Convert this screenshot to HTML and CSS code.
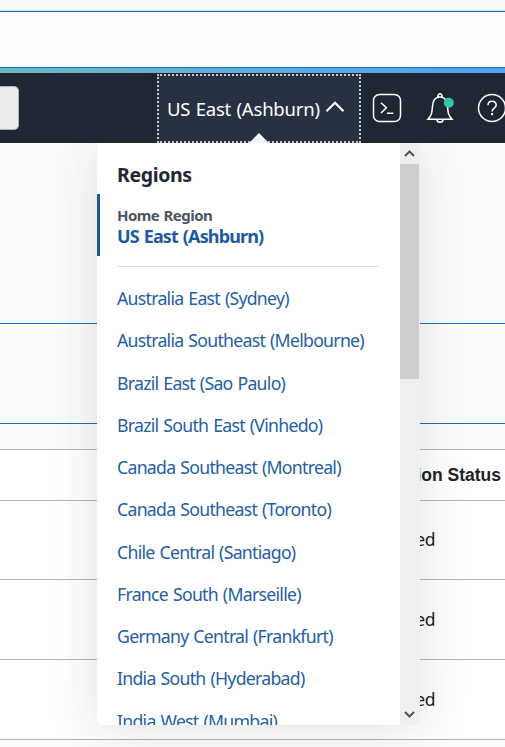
FILE: index.html
```html
<!DOCTYPE html>
<html lang="en">
<head>
<meta charset="utf-8">
<title>Regions</title>
<link rel="stylesheet" href="styles.css">
</head>
<body>
<div class="tabs"></div>
<div class="toolbar"></div>
<div class="accent"></div>
<header class="header">
  <div class="search"></div>
  <button class="region-button"><span class="region-name">US East (Ashburn)</span>
    <svg class="chevron" width="20" height="12" viewBox="0 0 20 12"><path d="M1.5 10.2 10 1.8l8.500 8.400"/></svg>
    <i class="arrow"></i>
  </button>
  <svg class="icon shell" width="30" height="30" viewBox="0 0 30 30"><rect x="1.500" y="1.500" width="27" height="27" rx="6"/><path d="M9 9.700l5.400 5.100L9 20M15 20.300h6.300"/></svg>
  <svg class="icon bell" width="28" height="32" viewBox="0 0 28 32"><path d="M2 27.300C5 24 6 22 6.400 15c.3-6.500 3-10 7.600-10s7.300 3.500 7.600 10c.4 7 1.400 9 4.400 12.300zM11 27.800c0 3.300 6 3.300 6 0M12 5c-.7-4.200 4.700-4.200 4 0"/><circle class="dot" cx="22.800" cy="10.800" r="5"/></svg>
  <svg class="icon help" width="30" height="30" viewBox="0 0 30 30"><circle cx="15" cy="15" r="13.500"/><path d="M11 12.200c0-5.300 8.200-5.200 8.200-.3 0 3.400-4.100 3-4.100 6.600"/><path class="point" d="M15.100 20v2.200"/></svg>
</header>
<main class="page">
  <div class="summary"></div>
  <div class="panel"></div>
  <div class="gap"></div>
  <div class="row head">Region Status</div>
  <div class="row first"><span>Subscribed</span></div>
  <div class="row"><span>Subscribed</span></div>
  <div class="row"><span>Subscribed</span></div>
  <section class="menu">
    <div class="content">
      <h2>Regions</h2>
      <div class="home"><small>Home Region</small><strong>US East (Ashburn)</strong></div>
      <hr>
      <ul>
        <li>Australia East (Sydney)</li>
        <li>Australia Southeast (Melbourne)</li>
        <li>Brazil East (Sao Paulo)</li>
        <li>Brazil South East (Vinhedo)</li>
        <li>Canada Southeast (Montreal)</li>
        <li>Canada Southeast (Toronto)</li>
        <li>Chile Central (Santiago)</li>
        <li>France South (Marseille)</li>
        <li>Germany Central (Frankfurt)</li>
        <li>India South (Hyderabad)</li>
        <li>India West (Mumbai)</li>
      </ul>
    </div>
    <div class="scrollbar">
      <svg width="20" height="21" viewBox="0 0 20 21"><path d="M5 13l4.500-4.500L14 13"/></svg>
      <div class="thumb"></div>
      <svg class="down" width="20" height="21" viewBox="0 0 20 21"><path d="M5 8l4.500 4.500L14 8"/></svg>
    </div>
  </section>
</main>
</body>
</html>
```
FILE: styles.css
```css
* { box-sizing: border-box; }
body { margin: 0; height: 747px; overflow: hidden; background: #fcfcfc; font-family: "Noto Sans", "Open Sans", sans-serif; }
.tabs { height: 12px; background: #f9f9f9; border-bottom: 1px solid #1072b8; box-shadow: inset 0 -1px #d8d8d8; }
.toolbar { height: 56px; background: #fdfdfd; border-bottom: 1px solid #1072b8; }
.accent { height: 5px; background: linear-gradient(90deg, #70b7c2, #65add5 40%, #5ca4ea 75%, #579ff0); }
.header { position: relative; z-index: 2; height: 70px; display: flex; align-items: flex-start; background: #1e2733; }
.search { width: 19px; height: 44px; margin: 13px 138px 0 0; flex: none; background: #ebebeb; border: 1px solid #aab4bc; border-left: 0; border-radius: 0 5px 5px 0; }
.region-button { position: relative; flex: none; width: 204px; height: 69px; margin-top: 1px; padding: 0 0 0 8px; display: flex; align-items: center; background: #273142; border: 2px dotted #c5c9cf; color: #fff; font: 18.500px "Noto Sans", sans-serif; text-align: left; }
.region-name { width: 158px; white-space: nowrap; letter-spacing: -.2px; word-spacing: .8px; }
.chevron { margin-top: -4px; fill: none; stroke: #fff; stroke-width: 2.2; }
.arrow { position: absolute; left: 90px; bottom: -2px; width: 20px; height: 10px; background: #f5f6f6; clip-path: polygon(50% 0, 100% 100%, 0 100%); }
.icon { flex: none; fill: none; stroke: #fff; stroke-width: 1.500; }
.shell { margin: 20px 0 0 11px; }
.bell { margin: 19px 0 0 24px; }
.help { margin: 20px 0 0 23px; }
.dot { fill: #36c5a6; stroke: none; }
.point { stroke-width: 2; }
.page { position: relative; height: 604px; }
.summary { height: 181px; border-bottom: 1px solid #1072b8; }
.panel { height: 100px; border-bottom: 1px solid #1072b8; }
.gap { height: 26px; border-bottom: 1px solid #b0b4bd; }
.row { height: 80px; display: flex; align-items: center; justify-content: flex-end; padding: 0 70px 2px 0; background: #fff; border-bottom: 1px solid #b0b4bd; color: #222; font-size: 17.500px; letter-spacing: -.4px; }
.head { height: 51px; padding: 0 4px 0 0; font: bold 17.500px "Liberation Sans", sans-serif; letter-spacing: 0; }
.first { height: 79px; }
.menu { position: absolute; left: 97px; top: 0; width: 323px; height: 582px; display: flex; overflow: hidden; border-radius: 5px; background: #fff; box-shadow: 0 4px 50px rgba(20, 32, 35, .14); }
.content { width: 303px; }
h2 { margin: 18px 20px 5px; font-size: 19.500px; line-height: 28px; font-weight: 700; letter-spacing: -.35px; color: #1e2733; }
.home { height: 62px; padding: 11px 0 0 17px; border-left: 3px solid #1e59a0; display: flex; flex-direction: column; white-space: nowrap; }
small { color: #4d555e; font-size: 15px; line-height: 20px; font-weight: 700; letter-spacing: -.55px; word-spacing: 1px; }
strong { color: #1e59a0; font-size: 18px; line-height: 22px; letter-spacing: -.85px; word-spacing: 1px; }
hr { margin: 10px 21px 10px 20px; border: 0; height: 1px; background: #ddd; }
ul { list-style: none; margin: 0; padding: 0 0 0 20px; }
li { height: 42.250px; line-height: 42.250px; color: #2460a4; font-size: 17.700px; letter-spacing: -.73px; word-spacing: 1px; white-space: nowrap; }
.scrollbar { width: 20px; display: flex; flex-direction: column; background: #efefef; }
.scrollbar svg { flex: none; fill: none; stroke: #555; stroke-width: 2; }
.thumb { width: 19px; height: 215px; background: #cdcdcd; }
.down { margin-top: auto; }
```
